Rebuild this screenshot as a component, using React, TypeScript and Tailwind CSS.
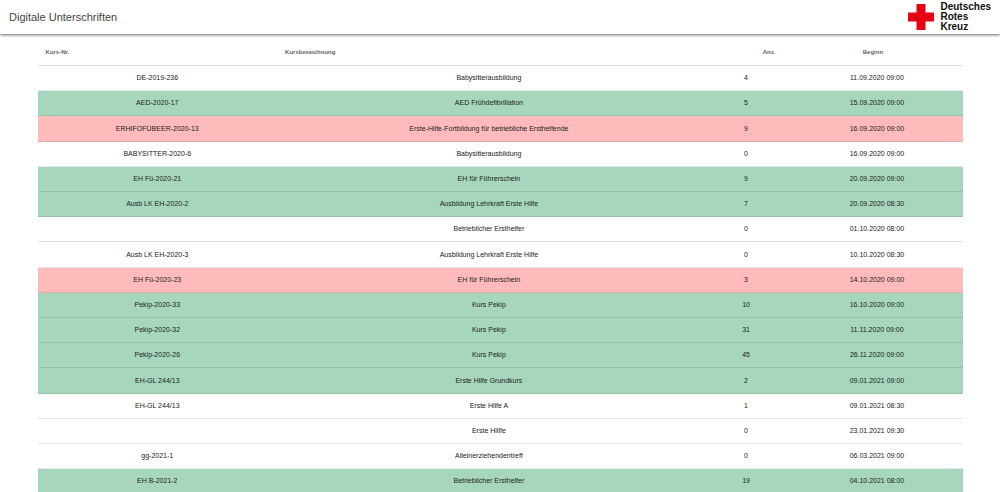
import React from 'react';

type Status = 'open' | 'done' | 'missing';

interface Course {
    nr: string;
    title: string;
    count: number;
    start: string;
    status: Status;
}

const courses: Course[] = [
    { nr: 'DE-2019-236', title: 'Babysitterausbildung', count: 4, start: '11.09.2020 09:00', status: 'open' },
    { nr: 'AED-2020-17', title: 'AED Frühdefibrillation', count: 5, start: '15.09.2020 09:00', status: 'done' },
    { nr: 'ERHIFOFÜBEER-2020-13', title: 'Erste-Hilfe-Fortbildung für betriebliche Ersthelfende', count: 9, start: '16.09.2020 09:00', status: 'missing' },
    { nr: 'BABYSITTER-2020-6', title: 'Babysitterausbildung', count: 0, start: '16.09.2020 09:00', status: 'open' },
    { nr: 'EH Fü-2020-21', title: 'EH für Führerschein', count: 9, start: '20.09.2020 09:00', status: 'done' },
    { nr: 'Ausb LK EH-2020-2', title: 'Ausbildung Lehrkraft Erste Hilfe', count: 7, start: '20.09.2020 08:30', status: 'done' },
    { nr: '', title: 'Betrieblicher Ersthelfer', count: 0, start: '01.10.2020 08:00', status: 'open' },
    { nr: 'Ausb LK EH-2020-3', title: 'Ausbildung Lehrkraft Erste Hilfe', count: 0, start: '10.10.2020 08:30', status: 'open' },
    { nr: 'EH Fü-2020-23', title: 'EH für Führerschein', count: 3, start: '14.10.2020 09:00', status: 'missing' },
    { nr: 'Pekip-2020-33', title: 'Kurs Pekip', count: 10, start: '16.10.2020 09:00', status: 'done' },
    { nr: 'Pekip-2020-32', title: 'Kurs Pekip', count: 31, start: '11.11.2020 09:00', status: 'done' },
    { nr: 'Pekip-2020-26', title: 'Kurs Pekip', count: 45, start: '26.11.2020 09:00', status: 'done' },
    { nr: 'EH-GL 244/13', title: 'Erste Hilfe Grundkurs', count: 2, start: '09.01.2021 09:00', status: 'done' },
    { nr: 'EH-GL 244/13', title: 'Erste Hilfe A', count: 1, start: '09.01.2021 08:30', status: 'open' },
    { nr: '', title: 'Erste Hillfe', count: 0, start: '23.01.2021 09:30', status: 'open' },
    { nr: 'gg-2021-1', title: 'Alleinerziehendentreff', count: 0, start: '06.03.2021 09:00', status: 'open' },
    { nr: 'EH B-2021-2', title: 'Betrieblicher Ersthelfer', count: 19, start: '04.10.2021 08:00', status: 'done' },
];

const rowColors: Record<Status, string> = {
    open: 'bg-white',
    done: 'bg-[#a6d7bc]',
    missing: 'bg-[#ffbbbb]',
};

const Logo = () => (
    <div className="flex items-center gap-1.5">
        <svg className="size-[26px]" viewBox="0 0 26 26" aria-hidden="true">
            <path d="M8.5 0h9v8.5H26v9h-8.5V26h-9v-8.5H0v-9h8.5z" fill="#e60014" />
        </svg>
        <div className="text-[10px] leading-[10px] font-bold text-[#111]">
            <div>Deutsches</div>
            <div>Rotes</div>
            <div>Kreuz</div>
        </div>
    </div>
);

export default function App() {
    return (
        <div className="h-screen overflow-hidden bg-white font-['Liberation_Sans',Arial,sans-serif]">
            <header className="relative flex h-[34px] items-center justify-between bg-white px-[9px] shadow-[0_1px_3px_rgba(0,0,0,0.6)]">
                <h1 className="text-[11px] text-[#444]">Digitale Unterschriften</h1>
                <Logo />
            </header>

            <main className="px-[3.75%] pt-[5px]">
                <table className="w-full table-fixed border-separate border-spacing-0 text-[7px] leading-[10px] text-[#222]">
                    <colgroup>
                        <col className="w-[25.9%]" />
                        <col className="w-[45.8%]" />
                        <col className="w-[9.8%]" />
                        <col />
                    </colgroup>
                    <thead className="text-[6px] text-[#666]">
                        <tr className="h-[27px] *:border-b *:border-black/10">
                            <th className="pl-2 text-left">Kurs-Nr.</th>
                            <th className="pl-2 text-left">Kursbezeichnung</th>
                            <th className="pr-4 text-right">Anz.</th>
                            <th className="pr-2 text-center">Beginn</th>
                        </tr>
                    </thead>
                    <tbody className="text-center">
                        {courses.map((course, i) => (
                            <tr
                                key={i}
                                className={`h-[25px] *:border-b *:border-black/10 nth-[5n+3]:h-[26px] ${rowColors[course.status]}`}
                            >
                                <td>{course.nr}</td>
                                <td>{course.title}</td>
                                <td>{course.count}</td>
                                <td>{course.start}</td>
                            </tr>
                        ))}
                    </tbody>
                </table>
            </main>
        </div>
    );
}
